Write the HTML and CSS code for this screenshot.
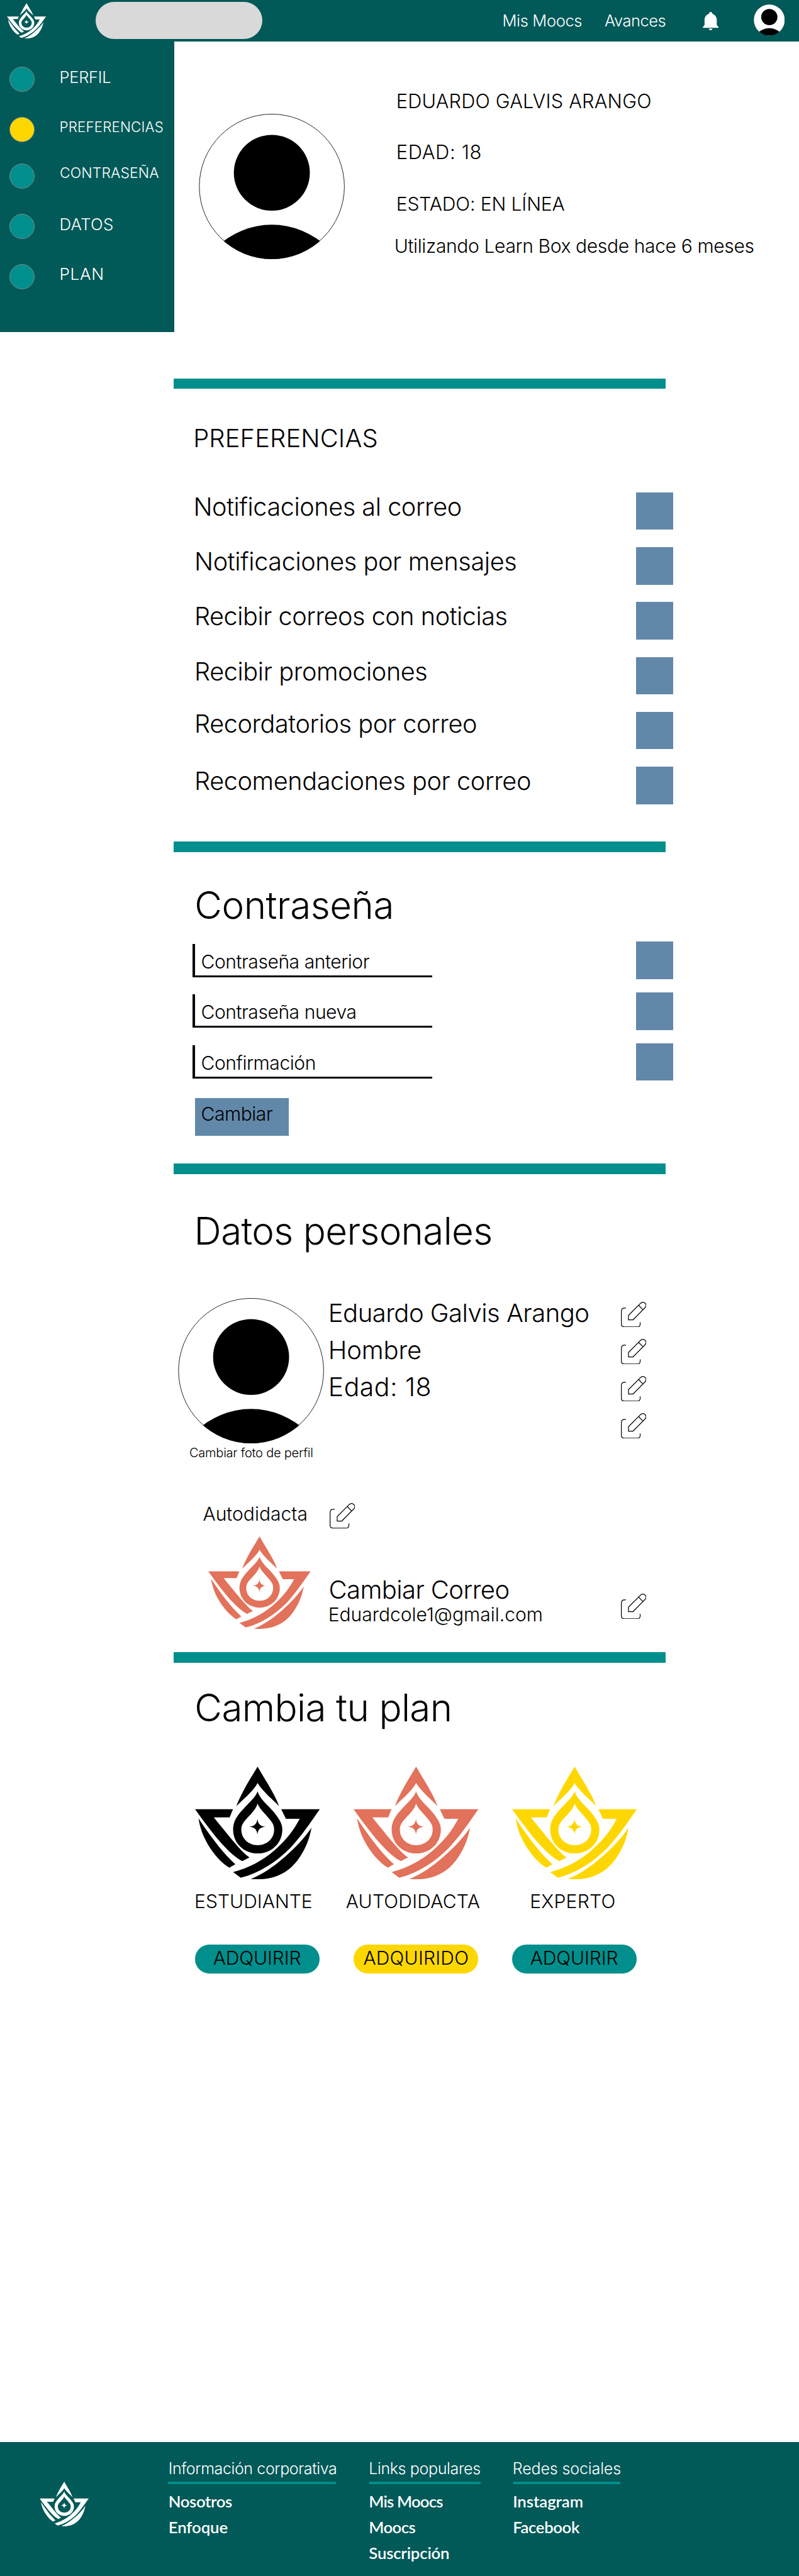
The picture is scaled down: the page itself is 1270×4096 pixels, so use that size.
FILE: index.html
```html
<!DOCTYPE html>
<html lang="es">
<head>
<meta charset="utf-8">
<title>Learn Box - Preferencias</title>
<link rel="stylesheet" href="styles.css">
</head>
<body>
<svg class="sprite" width="0" height="0" aria-hidden="true">
  <symbol id="logo" viewBox="55 78 898 814" preserveAspectRatio="none">
    <path d="M505 78C540 140 580 200 620 275C640 315 652 340 658 362C620 322 590 298 560 265C535 238 515 215 505 196C495 218 475 242 450 268C420 300 385 330 353 362C362 335 380 298 400 258C435 190 475 130 505 78Z"/>
    <path fill-rule="evenodd" d="M505 256C517 295 545 325 575 356C610 392 640 425 662 462C677 487 683 508 683 532C683 630 604 704 506 704C408 704 329 630 329 532C329 490 343 455 375 415C410 372 440 345 470 311C488 291 499 275 505 256ZM505 344C497 372 480 395 455 422C425 455 408 470 396 495C389 510 388 520 388 532C388 597 440 644 506 644C572 644 624 597 624 532C624 512 621 500 610 482C595 457 573 437 551 411C528 384 512 366 505 344Z"/>
    <path d="M504 454C507 490 525 509 562 511C525 514 507 532 504 568C500 532 483 514 443 511C483 508 500 490 504 454Z"/>
    <path d="M55 385H328L304 444H190C240 505 295 575 345 633C385 680 415 710 447 733L395 759C350 735 310 700 265 652C190 573 120 475 55 385Z"/>
    <path d="M80 451C125 520 175 590 225 652C265 702 305 745 345 782L302 807C240 768 190 710 148 640C110 575 90 515 80 451Z"/>
    <path d="M675 385H953C890 475 820 580 740 665C640 765 520 845 384 879L329 838C440 808 540 757 630 678C715 603 765 535 808 454H709Z"/>
    <path d="M893 519C880 590 855 660 812 725C735 845 625 900 454 890C540 855 620 800 700 730C780 660 835 600 893 519Z"/>
  </symbol>
  <clipPath id="face"><circle cx="175.5" cy="175" r="175"/></clipPath>
  <symbol id="avatar" viewBox="0 0 351 350" preserveAspectRatio="none">
    <circle class="avatar-ring" cx="175.5" cy="175" r="174.3"/>
    <circle cx="175.5" cy="142" r="91.3"/>
    <circle cx="175.5" cy="457.500" r="190.300" clip-path="url(#face)"/>
  </symbol>
  <symbol id="edit" viewBox="36 57 183 183">
    <g fill="none" stroke="#000" stroke-width="5.500">
      <path stroke-linecap="round" d="M70 101.500H62Q39 101.500 39 125V215Q39 237.500 62 237.500H150Q174 237.500 174 217V206"/>
      <path d="M90 154L176 68Q187 58 199 61Q213 65 216 78Q218 89 209 99L123 186H90ZM163 82L193 113"/>
    </g>
  </symbol>
</svg>

<header class="topbar">
  <svg class="topbar-logo"><use href="#logo"/></svg>
  <div class="search"></div>
  <nav class="topnav">
    <a class="moocs">Mis Moocs</a>
    <a class="avances">Avances</a>
  </nav>
  <svg class="bell" viewBox="87 57 114 132"><path d="M144 57C151 57 156 62 156 70C176 76 188 93 188 114V150C190 158 201 160 201 171H87C87 161 98 159 100 150V114C100 93 111 76 132 70C132 62 137 57 144 57ZM131 177H156C156 185 151 189 144 189C137 189 131 185 131 177Z"/></svg>
  <svg class="topbar-avatar"><use href="#avatar"/></svg>
</header>

<div class="hero">
  <aside class="sidebar">
    <div class="side-item perfil"><i class="dot"></i><span>PERFIL</span></div>
    <div class="side-item preferencias active"><i class="dot"></i><span>PREFERENCIAS</span></div>
    <div class="side-item contrasena"><i class="dot"></i><span>CONTRASEÑA</span></div>
    <div class="side-item datos"><i class="dot"></i><span>DATOS</span></div>
    <div class="side-item plan-link"><i class="dot"></i><span>PLAN</span></div>
  </aside>
  <svg class="avatar hero-avatar"><use href="#avatar"/></svg>
  <div class="hero-info">
    <p class="hero-name">EDUARDO GALVIS ARANGO</p>
    <p class="hero-age">EDAD: 18</p>
    <p class="hero-state">ESTADO: EN LÍNEA</p>
    <p class="hero-since">Utilizando Learn Box desde hace 6 meses</p>
  </div>
</div>

<main>
  <section class="prefs">
    <h2>PREFERENCIAS</h2>
    <div class="pref first"><span>Notificaciones al correo</span><i class="box"></i></div>
    <div class="pref"><span>Notificaciones por mensajes</span><i class="box"></i></div>
    <div class="pref tight"><span>Recibir correos con noticias</span><i class="box"></i></div>
    <div class="pref"><span>Recibir promociones</span><i class="box"></i></div>
    <div class="pref raised"><span>Recordatorios por correo</span><i class="box"></i></div>
    <div class="pref"><span>Recomendaciones por correo</span><i class="box"></i></div>
  </section>

  <section class="password">
    <h2>Contraseña</h2>
    <div class="field-row"><div class="field">Contraseña anterior</div><i class="box"></i></div>
    <div class="field-row"><div class="field">Contraseña nueva</div><i class="box"></i></div>
    <div class="field-row"><div class="field">Confirmación</div><i class="box"></i></div>
    <div class="change">Cambiar</div>
  </section>

  <section class="personal">
    <h2>Datos personales</h2>
    <div class="person">
      <div class="photo">
        <svg class="avatar"><use href="#avatar"/></svg>
        <p>Cambiar foto de perfil</p>
      </div>
      <div class="facts">
        <div class="fact"><span>Eduardo Galvis Arango</span><svg class="edit"><use href="#edit"/></svg></div>
        <div class="fact gender"><span>Hombre</span><svg class="edit"><use href="#edit"/></svg></div>
        <div class="fact age"><span>Edad: 18</span><svg class="edit"><use href="#edit"/></svg></div>
        <div class="fact"><span></span><svg class="edit"><use href="#edit"/></svg></div>
      </div>
    </div>
    <div class="level"><span>Autodidacta</span><svg class="edit"><use href="#edit"/></svg></div>
    <div class="mail">
      <svg class="mail-logo coral"><use href="#logo"/></svg>
      <div class="mail-text">
        <p class="mail-title">Cambiar Correo</p>
        <p class="mail-address">Eduardcole1@gmail.com</p>
      </div>
      <svg class="edit"><use href="#edit"/></svg>
    </div>
  </section>

  <section class="plans">
    <h2>Cambia tu plan</h2>
    <div class="plan-list">
      <div class="plan estudiante">
        <svg class="plan-logo"><use href="#logo"/></svg>
        <p>ESTUDIANTE</p>
        <div class="buy">ADQUIRIR</div>
      </div>
      <div class="plan autodidacta">
        <svg class="plan-logo coral"><use href="#logo"/></svg>
        <p>AUTODIDACTA</p>
        <div class="buy owned">ADQUIRIDO</div>
      </div>
      <div class="plan experto">
        <svg class="plan-logo gold"><use href="#logo"/></svg>
        <p>EXPERTO</p>
        <div class="buy">ADQUIRIR</div>
      </div>
    </div>
  </section>
</main>

<footer>
  <svg class="footer-logo"><use href="#logo"/></svg>
  <div class="col corp">
    <h3>Información corporativa</h3>
    <a class="nosotros">Nosotros</a>
    <a>Enfoque</a>
  </div>
  <div class="col links">
    <h3>Links populares</h3>
    <a class="mis">Mis Moocs</a>
    <a class="moocs-link">Moocs</a>
    <a class="sus">Suscripción</a>
  </div>
  <div class="col social">
    <h3>Redes sociales</h3>
    <a>Instagram</a>
    <a class="face">Facebook</a>
  </div>
</footer>
</body>
</html>
```
FILE: styles.css
```css
* { box-sizing: border-box; }
body {
  margin: 0;
  width: 1270px;
  height: 4096px;
  overflow: hidden;
  background: #fff;
  color: #000;
  font-family: Inter, "Liberation Sans", sans-serif;
  font-weight: 330;
  white-space: nowrap;
}
p, h2, h3 { margin: 0; font-weight: 330; }
svg, i { display: block; flex: none; }
.sprite { position: absolute; }
.coral { fill: #e2725b; }
.gold { fill: #ffd700; }
.avatar-ring { fill: #fff; stroke: #000; stroke-width: 1.3; }
.avatar { width: 232.200px; height: 231px; }

/* Top bar */
.topbar {
  display: flex;
  align-items: center;
  height: 66px;
  padding: 0 0 2px 11.300px;
  background: #015958;
}
.topbar-logo { width: 62.200px; height: 56.200px; margin-top: 1.500px; fill: #fff; }
.search { width: 264.500px; height: 59.500px; margin: 1px 0 0 78.800px; border-radius: 30px; background: #d9d9d9; }
.topnav { display: flex; margin-left: 381.700px; color: #fff; font-size: 25.480px; }
.moocs { width: 162.500px; letter-spacing: -.340px; }
.avances { width: 156px; letter-spacing: -.450px; }
.bell { width: 25.200px; height: 29.200px; margin-top: 3px; fill: #fff; }
.topbar-avatar { width: 49.600px; height: 49.600px; margin-left: 55.700px; }

/* Sidebar and profile summary */
.hero { display: flex; height: 535.900px; }
.sidebar { width: 276.500px; height: 462px; padding: 40.300px 0 0 14.600px; background: #015958; color: #fff; }
.side-item { display: flex; height: 40px; margin-bottom: 40.100px; font-size: 25.480px; }
.dot { width: 40px; height: 40px; margin-right: 39.900px; border: 1px solid #7a8c8b; border-radius: 50%; background: #008f8c; }
.active .dot { background: #ffd700; }
.perfil { line-height: 33.200px; letter-spacing: -.250px; }
.preferencias { margin-bottom: 33.400px; font-size: 22.300px; line-height: 31px; letter-spacing: .180px; }
.contrasena { font-size: 22.900px; line-height: 30.400px; letter-spacing: .110px; }
.contrasena .dot { margin-right: 40.400px; }
.datos { font-size: 25.900px; line-height: 33.600px; letter-spacing: .250px; }
.plan-link { font-size: 26.200px; line-height: 31px; letter-spacing: .600px; }
.hero-avatar { margin: 115.200px 0 0 39.600px; }
.hero-info { padding: 75.100px 0 0 81.400px; font-size: 30.030px; line-height: 40px; }
.hero-name { font-size: 30.700px; letter-spacing: .220px; }
.hero-age { margin-top: 40.700px; font-size: 30.900px; letter-spacing: .650px; }
.hero-state { margin-top: 42.600px; letter-spacing: -.1px; }
.hero-since { margin: 26.200px 0 0 -2.900px; letter-spacing: -.370px; }

/* Settings sections */
main { width: 794px; margin-left: 276.300px; }
section::before { content: ""; display: block; width: 782px; height: 16.600px; background: #008f8c; }
section h2 { font-size: 60.050px; line-height: 80px; }
.box { width: 59.500px; height: 59.600px; background: #6288a9; }

.prefs { height: 736.200px; }
.prefs h2 { margin: 48.900px 0 55.300px 30.900px; font-size: 39.900px; line-height: 60px; letter-spacing: .110px; }
.pref {
  display: flex;
  justify-content: space-between;
  height: 59.600px;
  margin-bottom: 27.700px;
  padding-left: 32.700px;
  font-size: 39.580px;
  line-height: 46.500px;
  letter-spacing: -.380px;
}
.pref.first { padding-left: 31.200px; letter-spacing: -.430px; }
.pref.tight { letter-spacing: -.460px; }
.pref.raised { line-height: 38px; letter-spacing: -.410px; }

.password { height: 512px; }
.password h2 { margin: 44.600px 0 18.100px 33px; letter-spacing: -.450px; }
.field-row { display: flex; justify-content: space-between; height: 59.600px; margin-bottom: 21.100px; padding-left: 29.800px; }
.field {
  width: 381.200px;
  height: 53px;
  margin-top: 3.400px;
  padding: 8px 0 0 9.400px;
  border-left: 4px solid #000;
  border-bottom: 3px solid #000;
  font-size: 30.030px;
  line-height: 41px;
  letter-spacing: -.440px;
}
.change {
  width: 149.500px;
  height: 59.800px;
  margin: 27.600px 0 0 33.300px;
  padding-left: 9.900px;
  background: #6288a9;
  font-size: 30.030px;
  line-height: 50.600px;
  letter-spacing: -.450px;
}

.personal { height: 777.200px; }
.personal h2 { margin: 50px 0 60.900px 32.300px; letter-spacing: -.650px; }
.person { display: flex; height: 267.300px; }
.photo { width: 244px; padding: 6.300px 0 0 6.800px; }
.photo p { padding-left: 17.900px; font-size: 20.020px; line-height: 30px; letter-spacing: -.230px; }
.edit { width: 40.500px; height: 40.500px; }
.facts { width: 507.100px; font-size: 40.030px; letter-spacing: -.520px; }
.fact { display: flex; justify-content: space-between; height: 59px; padding-left: 1.500px; line-height: 59px; }
.fact .edit { margin-top: 12.200px; }
.gender { letter-spacing: -.150px; }
.age { font-size: 41px; letter-spacing: .450px; }
.level { display: flex; height: 40.500px; margin-top: 65.500px; padding-left: 46.200px; font-size: 30.030px; line-height: 34.400px; }
.level span { width: 201.400px; letter-spacing: 0; }
.mail { display: flex; margin-top: 12.300px; padding-left: 55.100px; }
.mail-logo { width: 162.700px; height: 147.200px; }
.mail-text { width: 492.800px; padding: 59.900px 0 0 27.600px; }
.mail-title { padding-left: .900px; font-size: 40.030px; line-height: 50px; letter-spacing: -.600px; }
.mail-address { font-size: 30.030px; line-height: 29.200px; letter-spacing: -.010px; }
.mail .edit { margin-top: 90.800px; }

.plans { height: 1256.100px; }
.plans h2 { margin: 31.100px 0 53.600px 33px; letter-spacing: -.620px; }
.plan-list { display: flex; gap: 53.600px; padding-left: 33.300px; font-size: 30.030px; }
.plan { width: 198.400px; }
.plan-logo { width: 198.400px; height: 179.600px; }
.plan p { margin: 14.400px 0 49.700px; line-height: 40px; }
.estudiante p { margin-left: -.5px; letter-spacing: .020px; }
.autodidacta p { margin-left: -11.900px; letter-spacing: .240px; }
.experto p { margin-left: 28.600px; letter-spacing: .290px; }
.buy { height: 45.500px; padding-left: 29.100px; border-radius: 22.750px; background: #008f8c; line-height: 42.800px; letter-spacing: -.080px; }
.owned { padding-left: 15.800px; background: #ffd700; letter-spacing: .220px; }

/* Footer */
footer { display: flex; height: 212.600px; background: #015958; color: #fff; }
.footer-logo { width: 78px; height: 71px; margin: 62.200px 0 0 62.800px; fill: #fff; }
.col { display: flex; flex-direction: column; padding-top: 26.800px; }
.col h3 { height: 40px; margin-bottom: 6.600px; border-bottom: 4px solid #008f8c; font-size: 25.020px; font-weight: 300; line-height: 30px; }
.col a { font: 600 25.720px/41px Lato, sans-serif; letter-spacing: -.050px; }
.corp { width: 266.600px; margin-left: 126.400px; }
.corp h3 { text-indent: .6px; letter-spacing: -.400px; }
.corp a { margin-left: .5px; }
.corp .nosotros { letter-spacing: -.353px; }
.links { width: 177.300px; margin-left: 52.900px; }
.links h3 { text-indent: -.5px; letter-spacing: -.364px; }
.links a, .social a { margin-left: -.4px; }
.links .mis { letter-spacing: -.794px; }
.links .moocs-link { letter-spacing: -.564px; }
.links .sus { letter-spacing: -.175px; }
.social { width: 170.700px; margin-left: 51.600px; }
.social h3 { text-indent: -.8px; letter-spacing: -.133px; }
.social .face { letter-spacing: -.371px; }
```
